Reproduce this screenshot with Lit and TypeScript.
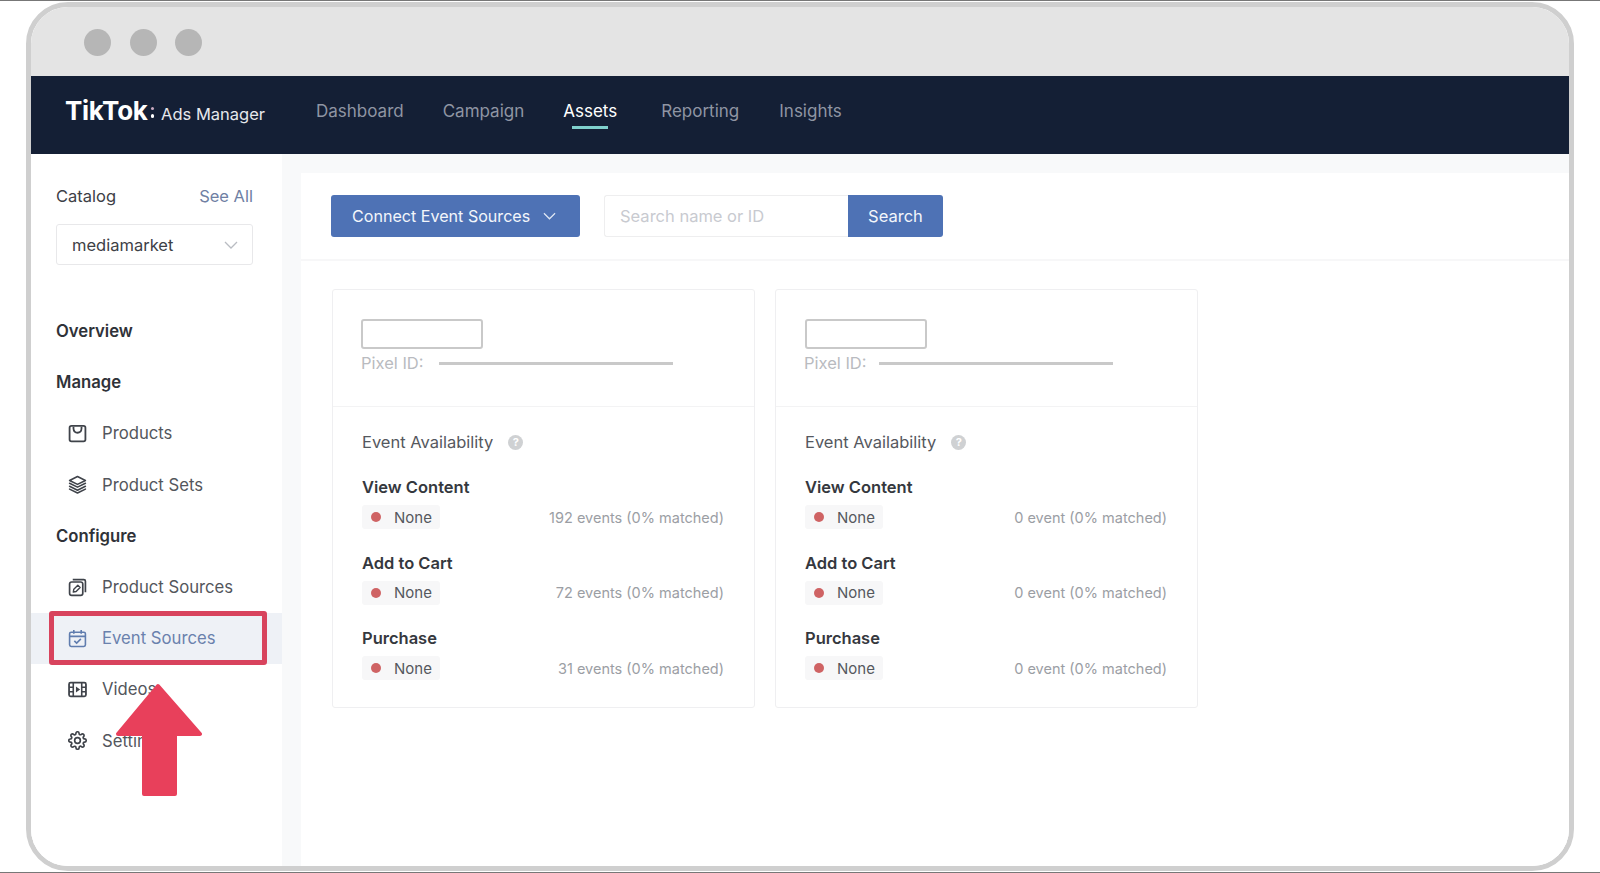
import { LitElement, html, css, svg } from "lit";
import { customElement } from "lit/decorators.js";

const icons: Record<string, unknown> = {
  products: svg`<rect x="1.500" y="1.800" width="15" height="14.700" rx="1.800" fill="none" stroke="currentColor" stroke-width="1.700"/><path d="M5.200 2.500v1.800c0 2.300 1.600 4 3.800 4s3.800-1.700 3.800-4V2.500" fill="none" stroke="currentColor" stroke-width="1.700"/>`,
  sets: svg`<path d="M9 1.500 L16.500 5.200 L9 8.900 L1.500 5.200 Z" fill="none" stroke="currentColor" stroke-width="1.500" stroke-linejoin="round"/><path d="M1.500 7.800 L9 11.500 L16.500 7.800M1.500 10.700 L9 14.400 L16.500 10.700M1.500 13.400 L9 17 L16.500 13.400" fill="none" stroke="currentColor" stroke-width="1.500" stroke-linecap="round" stroke-linejoin="round"/>`,
  sources: svg`<rect x="1.500" y="3.800" width="12.500" height="12.700" rx="2" fill="none" stroke="currentColor" stroke-width="1.600"/><path d="M4.500 1.500H15a1.500 1.500 0 0 1 1.500 1.500v10.500" fill="none" stroke="currentColor" stroke-width="1.600"/><path d="M5 13.300l.5-2.700L9.300 6.800l2.200 2.200-3.800 3.800z" fill="none" stroke="currentColor" stroke-width="1.300" stroke-linejoin="round"/>`,
  event: svg`<rect x="1.500" y="3" width="15" height="13.500" rx="1.500" fill="none" stroke="currentColor" stroke-width="1.500"/><path d="M1.500 7h15M5.500 1v3.500M12.500 1v3.500" fill="none" stroke="currentColor" stroke-width="1.500"/><path d="M6 11.200l2.200 2.200 4-4" fill="none" stroke="currentColor" stroke-width="1.500"/>`,
  videos: svg`<rect x="1" y="2.500" width="16" height="13" rx="1.500" fill="none" stroke="currentColor" stroke-width="1.700"/><path d="M5 2.500v13M13 2.500v13M1 6.800h4M1 11.200h4M13 6.800h4M13 11.200h4" fill="none" stroke="currentColor" stroke-width="1.500"/><path d="M7.500 6.200 L11.500 9 L7.500 11.800 Z" fill="currentColor"/>`,
  settings: svg`<g transform="scale(.75)"><path d="M19.400 15a1.650 1.650 0 0 0 .33 1.820l.06.06a2 2 0 0 1 0 2.830 2 2 0 0 1-2.830 0l-.06-.06a1.650 1.650 0 0 0-1.820-.33 1.650 1.650 0 0 0-1 1.510V21a2 2 0 0 1-2 2 2 2 0 0 1-2-2v-.09A1.650 1.650 0 0 0 9 19.400a1.650 1.650 0 0 0-1.820.33l-.06.06a2 2 0 0 1-2.830 0 2 2 0 0 1 0-2.830l.06-.06a1.650 1.650 0 0 0 .33-1.820 1.650 1.650 0 0 0-1.510-1H3a2 2 0 0 1-2-2 2 2 0 0 1 2-2h.09A1.650 1.650 0 0 0 4.600 9a1.650 1.650 0 0 0-.33-1.820l-.06-.06a2 2 0 0 1 0-2.830 2 2 0 0 1 2.830 0l.06.06a1.650 1.650 0 0 0 1.820.33H9a1.650 1.650 0 0 0 1-1.510V3a2 2 0 0 1 2-2 2 2 0 0 1 2 2v.09a1.650 1.650 0 0 0 1 1.510 1.650 1.650 0 0 0 1.820-.33l.06-.06a2 2 0 0 1 2.830 0 2 2 0 0 1 0 2.830l-.06.06a1.650 1.650 0 0 0-.33 1.820V9a1.650 1.650 0 0 0 1.510 1H21a2 2 0 0 1 2 2 2 2 0 0 1-2 2h-.09a1.650 1.650 0 0 0-1.510 1z" fill="none" stroke="currentColor" stroke-width="2.100" stroke-linejoin="round"/><circle cx="12" cy="12" r="3.600" fill="none" stroke="currentColor" stroke-width="2.100"/></g>`,
};

interface Row { name: string; events: string; }
const card1: Row[] = [
  { name: "View Content", events: "192 events (0% matched)" },
  { name: "Add to Cart", events: "72 events (0% matched)" },
  { name: "Purchase", events: "31 events (0% matched)" },
];
const card2: Row[] = [
  { name: "View Content", events: "0 event (0% matched)" },
  { name: "Add to Cart", events: "0 event (0% matched)" },
  { name: "Purchase", events: "0 event (0% matched)" },
];

@customElement("app-root")
export class AppRoot extends LitElement {
  static styles = css`
    :host { display: block; height: 873px; font-family: Inter, "Liberation Sans", sans-serif; color: #3d4046; background: #fff; }
    * { box-sizing: border-box; }
    .page { height: 873px; padding: 1px 26px 1px; border-top: 1px solid #777; border-bottom: 1px solid #777; }
    .frame { position: relative; height: 100%; border: 5px solid #cfcfcf; border-radius: 42px; overflow: hidden; display: flex; flex-direction: column; background: #fff; }
    .title { height: 69px; flex: none; background: #e4e4e4; display: flex; align-items: center; gap: 18.5px; padding: 2px 0 0 53px; }
    .title i { width: 27px; height: 27px; border-radius: 50%; background: #b6b6b6; }
    .nav { height: 78px; flex: none; background: #141f35; display: flex; align-items: center; padding: 0 0 9px 34px; }
    .logo { display: flex; align-items: baseline; color: #fff; width: 251px; flex: none; }
    .logo b { font-size: 26px; font-weight: 700; letter-spacing: -0.3px; }
    .colon { display: inline-flex; flex-direction: column; gap: 4px; margin: 0 7px 0 3px; align-self: center; padding-top: 3px; }
    .colon u { width: 3.5px; height: 3.5px; border-radius: 50%; background: #fff; }
    .colon u:first-child { background: #c8a9c0; }
    .logo span { font-size: 16.5px; font-weight: 400; color: #e6e8ec; }
    .links { display: flex; align-items: center; gap: 39px; font-size: 17px; color: #8f95a3; }
    .links a { position: relative; padding: 0; line-height: 24px; }
    .links a.on { color: #fff; margin-right: 5px; }
    .links a:last-child { margin-left: 1px; }
    .links a.on::after { content: ""; position: absolute; left: 9px; right: 9px; bottom: -6px; height: 2.5px; background: #7fd0cd; }
    .body { flex: 1; display: flex; min-height: 0; background: #f8f9fa; }
    .side { width: 251px; flex: none; background: #fff; padding: 27px 0 0; position: relative; }
    .cat { display: flex; justify-content: space-between; padding: 0 29px 0 25px; font-size: 16.5px; line-height: 30px; }
    .cat a { color: #6f80a3; }
    .select { margin: 13px 29px 0 25px; height: 41px; border: 1px solid #e8e8ea; border-radius: 3px; display: flex; align-items: center; justify-content: space-between; padding: 0 14px 0 15px; font-size: 16.5px; }
    .select svg { display: block; color: #b9bcc2; }
    .menu { margin-top: 40.500px; display: flex; flex-direction: column; }
    .h, .it { height: 51.2px; display: flex; align-items: center; font-size: 16.7px; }
    .h { padding-left: 25px; font-weight: 600; color: #2f3238; }
    .it { padding-left: 37px; gap: 15px; color: #53565c; }
    .it svg { width: 19px; height: 19px; color: #3f434a; flex: none; }
    .it.sel { background: #eef1f6; color: #6a81ad; }
    .it.sel svg { color: #5f7cae; }
    .mark { position: absolute; left: 18px; top: 457px; width: 218px; height: 54px; border: 5px solid #d8435d; border-radius: 3px; }
    .arrow { position: absolute; left: 80px; top: 529px; width: 92px; height: 118px; }
    .main { flex: 1; margin: 19px 0 0 19px; background: #fff; min-width: 0; }
    .bar { height: 88px; border-bottom: 2px solid #f7f7f8; display: flex; align-items: center; padding: 0 0 0 30px; }
    .btn { background: #4e72b5; color: #f3f6fb; border-radius: 3px; height: 42px; display: flex; align-items: center; font-size: 16.5px; }
    .connect { width: 249px; padding-left: 21px; gap: 13px; font-size: 16.1px; }
    .connect svg { display: block; color: #dfe7f4; }
    .input { margin-left: 24px; width: 244px; height: 42px; border: 1px solid #eeeeef; border-right: none; border-radius: 3px 0 0 3px; display: flex; align-items: center; padding-left: 15px; font-size: 16.5px; color: #c8cad0; }
    .go { width: 95px; justify-content: center; border-radius: 0 3px 3px 0; }
    .cards { display: flex; gap: 20px; padding: 28px 0 0 31px; }
    .card { width: 423px; height: 419px; border: 1px solid #efeff1; border-radius: 3px; }
    .top { height: 117px; border-bottom: 1px solid #f3f3f4; padding: 29px 0 0 28px; }
    .box { width: 122px; height: 30px; border: 2.5px solid #c9c9c9; border-radius: 3px; }
    .pid { display: flex; align-items: center; margin-top: 2px; font-size: 16.5px; line-height: 24px; color: #b9bbc0; }
    .pid i { display: block; width: 234px; height: 3px; background: #c9c9c9; }
    .pid span { width: 78px; }
    .alt .box { margin-left: 1px; }
    .alt .pid span { width: 75px; }
    .low { padding: 20px 30px 0 29px; }
    .ea { display: flex; align-items: center; gap: 15px; font-size: 16.5px; line-height: 30px; color: #55585e; }
    .q { width: 15px; height: 15px; border-radius: 50%; background: #cfd1d3; color: #fff; font-size: 11px; font-weight: 700; display: flex; align-items: center; justify-content: center; }
    .row { height: 75.5px; display: flex; flex-direction: column; }
    .rows { margin-top: 15px; }
    .name { font-size: 16.5px; font-weight: 600; line-height: 30px; color: #35383e; }
    .line { display: flex; align-items: center; justify-content: space-between; margin-top: 3px; }
    .tag { width: 78px; height: 24px; background: #f7f7f8; border-radius: 3px; display: flex; align-items: center; padding-left: 9px; gap: 13px; font-size: 15px; color: #55585e; }
    .tag i { width: 10px; height: 10px; border-radius: 50%; background: #cf6364; }
    .ev { font-size: 14.5px; color: #9b9ea4; }
  `;

  private chevron(w: number) {
    return html`<svg width=${w} height=${Math.round(w * 0.6)} viewBox="0 0 14 8"><path d="M1 1l6 6 6-6" fill="none" stroke="currentColor" stroke-width="1.3"/></svg>`;
  }

  private item(icon: string, label: string, sel = false) {
    return html`<div class="it ${sel ? "sel" : ""}"><svg viewBox="0 0 18 18">${icons[icon]}</svg><span>${label}</span></div>`;
  }

  private card(rows: Row[], alt = false) {
    return html`<div class="card ${alt ? "alt" : ""}">
      <div class="top"><div class="box"></div><div class="pid"><span>Pixel ID:</span><i></i></div></div>
      <div class="low">
        <div class="ea"><span>Event Availability</span><span class="q">?</span></div>
        <div class="rows">
          ${rows.map((r) => html`<div class="row"><div class="name">${r.name}</div>
            <div class="line"><div class="tag"><i></i><span>None</span></div><span class="ev">${r.events}</span></div></div>`)}
        </div>
      </div>
    </div>`;
  }

  render() {
    return html`<div class="page"><div class="frame">
      <div class="title"><i></i><i></i><i></i></div>
      <div class="nav">
        <div class="logo"><b>TikTok</b><span class="colon"><u></u><u></u></span><span>Ads Manager</span></div>
        <div class="links"><a>Dashboard</a><a>Campaign</a><a class="on">Assets</a><a>Reporting</a><a>Insights</a></div>
      </div>
      <div class="body">
        <div class="side">
          <div class="cat"><span>Catalog</span><a>See All</a></div>
          <div class="select"><span>mediamarket</span>${this.chevron(14)}</div>
          <div class="menu">
            <div class="h">Overview</div>
            <div class="h">Manage</div>
            ${this.item("products", "Products")}
            ${this.item("sets", "Product Sets")}
            <div class="h">Configure</div>
            ${this.item("sources", "Product Sources")}
            ${this.item("event", "Event Sources", true)}
            ${this.item("videos", "Videos")}
            ${this.item("settings", "Settings")}
          </div>
          <div class="mark"></div>
          <svg class="arrow" viewBox="0 0 92 118"><path d="M47 3 L89 51 H64 V111 H33 V51 H7 Z" fill="#e8405b" stroke="#e8405b" stroke-width="4" stroke-linejoin="round"/></svg>
        </div>
        <div class="main">
          <div class="bar">
            <div class="btn connect"><span>Connect Event Sources</span>${this.chevron(13)}</div>
            <div class="input">Search name or ID</div>
            <div class="btn go">Search</div>
          </div>
          <div class="cards">${this.card(card1)}${this.card(card2, true)}</div>
        </div>
      </div>
    </div></div>`;
  }
}
